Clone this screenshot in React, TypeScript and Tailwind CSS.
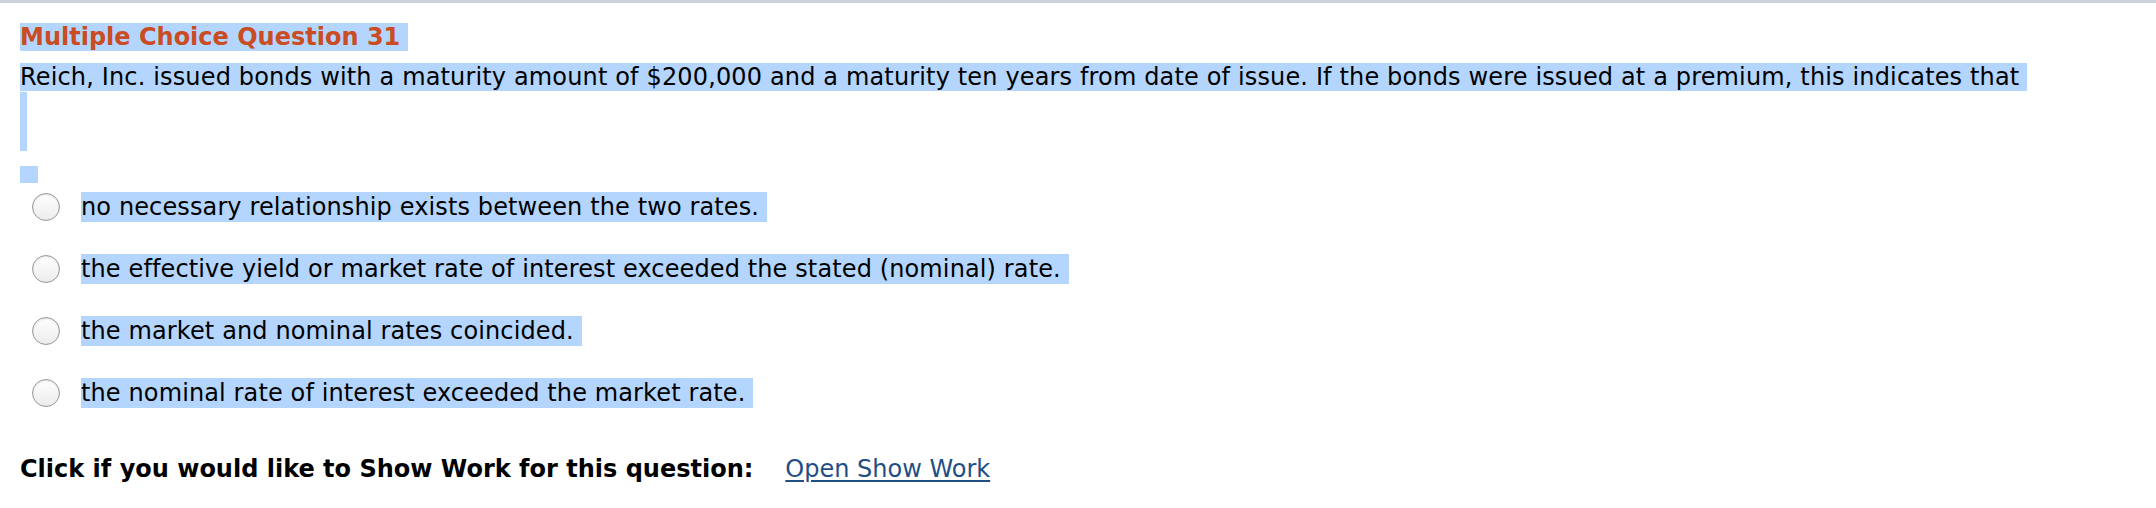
const options = [
  'no necessary relationship exists between the two rates.',
  'the effective yield or market rate of interest exceeded the stated (nominal) rate.',
  'the market and nominal rates coincided.',
  'the nominal rate of interest exceeded the market rate.',
];

function Radio() {
  return (
    <span className="w-[28px] h-[28px] rounded-full border border-[#999999] bg-gradient-to-b from-white to-[#ececec] shadow-[inset_0_1px_2px_rgba(0,0,0,0.12)] shrink-0" />
  );
}

export default function App() {
  return (
    <div className="w-[2156px] h-[508px] bg-white border-t-[3px] border-[#cdd1da] font-['DejaVu_Sans',Verdana,sans-serif] text-[24px] leading-[30px] text-black">
      <div className="pl-5 pt-[19px]">
        <div>
          <span className="bg-[#b4d5fe] font-bold text-[#c94c22] pr-2">Multiple Choice Question 31</span>
        </div>
        <div className="mt-[10px] tracking-[0.15px]">
          <span className="bg-[#b4d5fe] pr-2">
            Reich, Inc. issued bonds with a maturity amount of $200,000 and a maturity ten years from date of issue. If the bonds were issued at a premium, this indicates that
          </span>
        </div>
        <div className="w-[7px] h-[59px] bg-[#b4d5fe]" />
        <div className="mt-[15px] w-[18px] h-[17px] bg-[#b4d5fe]" />

        <div className="mt-[9px] flex flex-col gap-[32px] tracking-[0.12px]">
          {options.map((o) => (
            <label key={o} className="flex items-center h-[30px]">
              <span className="ml-[12px] mr-[21px] flex">
                <Radio />
              </span>
              <span className="bg-[#b4d5fe] pr-2">{o}</span>
            </label>
          ))}
        </div>

        <div className="mt-[46px] flex items-center">
          <span className="font-bold">Click if you would like to Show Work for this question:</span>
          <a href="#" className="ml-[32px] text-[#1f4f86] underline underline-offset-[3px]">
            Open Show Work
          </a>
        </div>
      </div>
    </div>
  );
}
